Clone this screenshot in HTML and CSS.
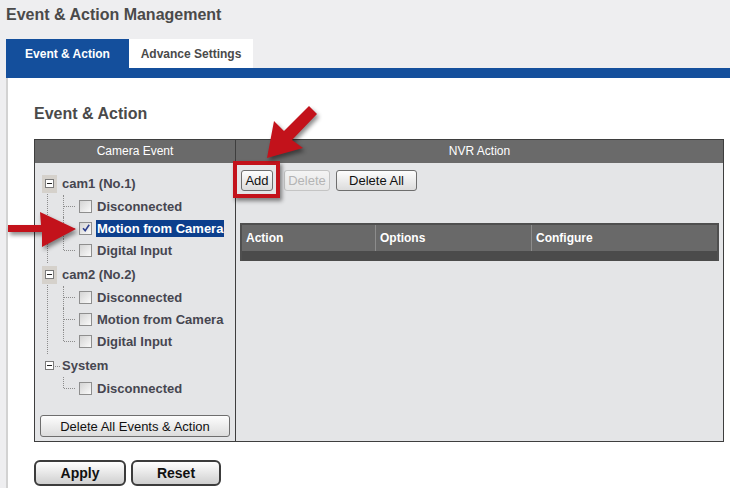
FILE: index.html
```html
<!DOCTYPE html>
<html lang="en">
  <head>
    <meta charset="UTF-8" />
    <meta name="viewport" content="width=device-width, initial-scale=1.0" />
    <title>Event &amp; Action Management</title>
    <link rel="stylesheet" href="styles.css">
  </head>

  <body>
    <div class="page">
      <h1 class="title">Event &amp; Action Management</h1>

      <nav class="tabs">
        <a class="tab active">Event &amp; Action</a>
        <a class="tab">Advance Settings</a>
      </nav>
      <div class="tab-band"></div>

      <main class="content">
        <h2 class="heading">Event &amp; Action</h2>

        <div class="panel">
          <div class="col events">
            <div class="col-head">Camera Event</div>
            <div class="col-body">
              <ul class="tree">
                <li class="group">
                  <div class="node">
                    <span class="expander hl"><span class="minus"></span></span>
                    <span class="node-label">cam1 (No.1)</span>
                  </div>
                  <ul class="kids">
                    <li><span class="check"></span><span class="item-label">Disconnected</span></li>
                    <li>
                      <span class="check checked">
                        <svg width="10" height="10" viewBox="0 0 10 10"><path d="M2 5.2 L4.2 7.6 L8.2 1.8" fill="none" stroke="#2d3f8e" stroke-width="1.6"/></svg>
                      </span>
                      <span class="item-label selected">Motion from Camera</span>
                    </li>
                    <li><span class="check"></span><span class="item-label">Digital Input</span></li>
                  </ul>
                </li>
                <li class="group">
                  <div class="node">
                    <span class="expander hl"><span class="minus"></span></span>
                    <span class="node-label">cam2 (No.2)</span>
                  </div>
                  <ul class="kids">
                    <li><span class="check"></span><span class="item-label">Disconnected</span></li>
                    <li><span class="check"></span><span class="item-label">Motion from Camera</span></li>
                    <li><span class="check"></span><span class="item-label">Digital Input</span></li>
                  </ul>
                </li>
                <li class="group">
                  <div class="node">
                    <span class="expander plain"><span class="minus"></span></span>
                    <span class="node-label">System</span>
                  </div>
                  <ul class="kids">
                    <li><span class="check"></span><span class="item-label">Disconnected</span></li>
                  </ul>
                </li>
              </ul>
              <button class="btn wide">Delete All Events &amp; Action</button>
            </div>
          </div>

          <div class="col actions">
            <div class="col-head">NVR Action</div>
            <div class="col-body">
              <div class="action-buttons">
                <span class="marked"><button class="btn add">Add</button></span>
                <button class="btn del" disabled>Delete</button>
                <button class="btn del-all">Delete All</button>
              </div>
              <div class="vtable">
                <div class="vtable-head">
                  <div>Action</div>
                  <div>Options</div>
                  <div>Configure</div>
                </div>
                <div class="vtable-foot"></div>
              </div>
            </div>
          </div>
        </div>

        <div class="form-buttons">
          <button class="btn big apply">Apply</button>
          <button class="btn big reset">Reset</button>
        </div>
      </main>

      <!-- callout arrows drawn over the screenshot -->
      <svg class="arrows" width="730" height="488" viewBox="0 0 730 488">
        <polygon points="8,225 41,225 40,212 76,229 42,247 42,232 8,232" fill="#c3121b"/>
        <polygon points="267,158 274,121 284,131 309,106 317,114 292,140 303,148" fill="#c3121b"/>
      </svg>
    </div>
  </body>
</html>
```

FILE: styles.css
```css
body {
  margin: 0;
  font-family: "Liberation Sans", Arial, sans-serif;
  background-color: #eeeef0;
  color: #444;
}

.page {
  position: relative;
  width: 730px;
  height: 488px;
  overflow: hidden;
}

.title {
  margin: 6px 0 15px 6px;
  font-size: 16px;
  line-height: 18px;
  font-weight: bold;
  color: #4a4a4a;
}

.tabs {
  display: flex;
  margin-left: 6px;
  height: 29px;
}

.tab {
  display: flex;
  align-items: center;
  justify-content: center;
  font-size: 12px;
  font-weight: bold;
  color: #4a4a4a;
  background-color: white;
  width: 124px;
}

.tab.active {
  width: 123px;
  background-color: #144f9c;
  color: white;
}

.tab-band {
  margin-left: 6px;
  height: 10px;
  background-color: #144f9c;
}

.content {
  margin-left: 6px;
  border-left: 2px solid #d2d2d2;
  background-color: white;
  padding: 27px 0 10px 26px;
  height: 400px;
}

.heading {
  margin: 0 0 16px 0;
  font-size: 16px;
  line-height: 18px;
  color: #4a4a4a;
}

.panel {
  display: grid;
  grid-template-columns: 201px 1fr;
  width: 690px;
  box-sizing: border-box;
  border: 1px solid #3e3e3e;
  background-color: #e4e5e7;
}

.events {
  border-right: 1px solid #3e3e3e;
}

.col-head {
  height: 23px;
  line-height: 23px;
  text-align: center;
  font-size: 12px;
  color: white;
  background-color: #6a6a6a;
}

.col-body {
  height: 278px;
  box-sizing: border-box;
}

.events .col-body {
  display: flex;
  flex-direction: column;
  padding: 9px 0 4px 7px;
}

/* tree */
.tree,
.kids {
  list-style: none;
  margin: 0;
  padding: 0;
}

.group {
  position: relative;
}

.group + .group {
  padding-top: 2px;
}

.group::before {
  content: "";
  position: absolute;
  left: 5px;
  top: 18px;
  bottom: -2px;
  border-left: 1px dotted #8c8c8c;
}

.group + .group::before {
  top: 20px;
}

.group:last-child::before {
  display: none;
}

.node {
  display: flex;
  align-items: center;
  height: 23px;
}

.expander {
  position: relative;
  display: flex;
  align-items: center;
  justify-content: center;
  width: 15px;
  height: 18px;
}

.expander.hl {
  background-color: #d5d1cb;
}

.expander.plain {
  width: 11px;
  margin-left: 2px;
  margin-right: 2px;
}

.expander.plain::after {
  content: "";
  position: absolute;
  left: 11px;
  top: 9px;
  width: 5px;
  border-top: 1px dotted #8c8c8c;
}

.minus {
  position: relative;
  width: 7px;
  height: 7px;
  border: 1px solid #7a7a7a;
  background-color: white;
}

.minus::after {
  content: "";
  position: absolute;
  left: 1px;
  top: 3px;
  width: 5px;
  height: 1px;
  background-color: #222;
}

.node-label {
  margin-left: 5px;
  font-size: 13px;
  font-weight: bold;
  color: #464650;
}

.kids {
  margin-left: 21px;
}

.kids li {
  position: relative;
  display: flex;
  align-items: center;
  height: 22px;
  padding-left: 16px;
}

.kids li::before {
  content: "";
  position: absolute;
  left: 0;
  top: 0;
  height: 100%;
  border-left: 1px dotted #8c8c8c;
}

.kids li:last-child::before {
  height: 50%;
}

.kids li::after {
  content: "";
  position: absolute;
  left: 1px;
  top: 50%;
  width: 11px;
  border-top: 1px dotted #8c8c8c;
}

.check {
  display: flex;
  align-items: center;
  justify-content: center;
  width: 11px;
  height: 11px;
  border: 1px solid #8e8e8e;
  background: linear-gradient(135deg, #d4d4d4, #fafafa);
}

.item-label {
  margin-left: 4px;
  padding: 1px 1px;
  font-size: 13px;
  font-weight: bold;
  color: #464650;
}

.item-label.selected {
  background-color: #0c3f8d;
  color: white;
}

/* buttons */
.btn {
  font-family: "Liberation Sans", Arial, sans-serif;
  font-size: 13px;
  color: #111;
  height: 21px;
  padding: 0;
  border: 1px solid #6e6e6e;
  border-radius: 3px;
  background: linear-gradient(#fdfdfd, #dcdcdc);
}

.btn:disabled {
  color: #b4b4b4;
  border-color: #c4c4c4;
  background: linear-gradient(#f4f4f4, #e6e6e6);
}

.btn.wide {
  margin: auto 5px 0 -2px;
  height: 22px;
}

.actions .col-body {
  padding: 7px 4px 0 4px;
}

.action-buttons {
  display: flex;
  margin-left: 1px;
}

.marked {
  position: relative;
}

.marked::after {
  content: "";
  position: absolute;
  left: -8px;
  right: -7px;
  top: -9px;
  bottom: -7px;
  border: 4px solid #c3121b;
  box-shadow: 2px 3px 4px rgba(0, 0, 0, 0.45);
}

.btn.add {
  width: 32px;
}

.btn.del {
  width: 46px;
  margin-left: 11px;
}

.btn.del-all {
  width: 81px;
  margin-left: 6px;
}

.vtable {
  margin-top: 32px;
  border: 2px solid #4f4f4f;
  border-bottom: none;
}

.vtable-head {
  display: grid;
  grid-template-columns: 133px 156px 1fr;
  height: 26px;
  background-color: #696969;
}

.vtable-head div {
  display: flex;
  align-items: center;
  padding-left: 4px;
  font-size: 12px;
  font-weight: bold;
  color: white;
}

.vtable-head div + div {
  border-left: 1px solid #8c8c8c;
}

.vtable-foot {
  height: 10px;
  background-color: #4b4b4b;
}

.form-buttons {
  display: flex;
  gap: 5px;
  margin-top: 18px;
}

.btn.big {
  height: 26px;
  font-size: 14px;
  font-weight: bold;
  border: 2px solid #3c3c3c;
  border-radius: 6px;
  background: linear-gradient(#ffffff, #cfcfcf);
}

.btn.apply {
  width: 92px;
}

.btn.reset {
  width: 90px;
}

.arrows {
  position: absolute;
  left: 0;
  top: 0;
  pointer-events: none;
  filter: drop-shadow(2px 3px 2px rgba(0, 0, 0, 0.45));
}
```
